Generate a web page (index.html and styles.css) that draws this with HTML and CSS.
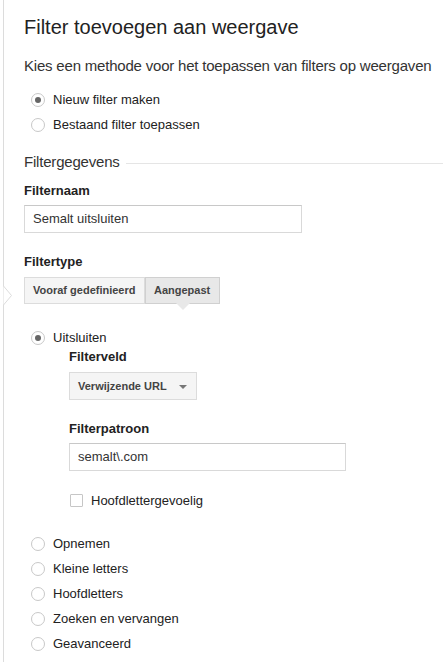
FILE: index.html
```html
<!DOCTYPE html>
<html lang="nl">
<head>
<meta charset="utf-8">
<title>Filter toevoegen aan weergave</title>
<link rel="stylesheet" href="styles.css">
</head>
<body>
<div class="panel">
  <svg class="panel-pointer" width="14" height="22" viewBox="0 0 14 22"><polyline points="0.5,1 8.5,10.5 0.5,20" fill="#fff" stroke="#dcdcdc" stroke-width="1"/></svg>
  <h1 class="title">Filter toevoegen aan weergave</h1>
  <p class="subtitle">Kies een methode voor het toepassen van filters op weergaven</p>
  <div class="radio-list method">
    <label class="radio-row"><span class="radio checked"></span><span>Nieuw filter maken</span></label>
    <label class="radio-row"><span class="radio"></span><span>Bestaand filter toepassen</span></label>
  </div>

  <div class="section-head"><span>Filtergegevens</span><span class="rule"></span></div>

  <div class="field-label first">Filternaam</div>
  <div class="input name-input">Semalt uitsluiten</div>

  <div class="field-label type-label">Filtertype</div>
  <div class="btn-group">
    <div class="seg">Vooraf gedefinieerd</div>
    <div class="seg selected">Aangepast</div>
  </div>

  <div class="radio-list exclude">
    <label class="radio-row"><span class="radio checked"></span><span>Uitsluiten</span></label>
  </div>
  <div class="sub">
    <div class="field-label tight">Filterveld</div>
    <div class="dropdown"><span>Verwijzende URL</span><span class="caret"></span></div>
    <div class="field-label gap">Filterpatroon</div>
    <div class="input pattern-input">semalt\.com</div>
    <label class="check-row"><span class="checkbox"></span><span>Hoofdlettergevoelig</span></label>
  </div>

  <div class="radio-list others">
    <label class="radio-row"><span class="radio"></span><span>Opnemen</span></label>
    <label class="radio-row"><span class="radio"></span><span>Kleine letters</span></label>
    <label class="radio-row"><span class="radio"></span><span>Hoofdletters</span></label>
    <label class="radio-row"><span class="radio"></span><span>Zoeken en vervangen</span></label>
    <label class="radio-row"><span class="radio"></span><span>Geavanceerd</span></label>
  </div>
</div>
</body>
</html>
```

FILE: styles.css
```css
html, body {
  margin: 0;
  padding: 0;
  background: #fff;
}
body {
  font-family: "Liberation Sans", Arial, sans-serif;
  color: #222;
  width: 443px;
  height: 662px;
  overflow: hidden;
}
.panel {
  position: relative;
  margin-left: 3px;
  border-left: 1px solid #dcdcdc;
  padding-left: 20px;
  height: 662px;
  box-sizing: border-box;
}
.panel-pointer {
  position: absolute;
  left: -1px;
  top: 285px;
}
.title {
  margin: 0;
  padding-top: 15px;
  font-size: 20px;
  line-height: 24px;
  font-weight: normal;
  color: #222;
}
.subtitle {
  margin: 17px 0 0;
  font-size: 15px;
  line-height: 20px;
  color: #333;
  white-space: nowrap;
  letter-spacing: -0.2px;
}
.radio-list {
  display: flex;
  flex-direction: column;
  gap: 9px;
}
.radio-list.method { margin-top: 16px; }
.radio-list.exclude { margin-top: 26px; }
.radio-list.others { margin-top: 28px; }
.radio-row {
  display: flex;
  align-items: center;
  gap: 8px;
  height: 16px;
  font-size: 13px;
  line-height: 16px;
  color: #222;
  padding-left: 7px;
}
.radio {
  width: 14px;
  height: 14px;
  box-sizing: border-box;
  border: 1px solid #c8c8c8;
  border-radius: 50%;
  background: #fff;
  display: flex;
  align-items: center;
  justify-content: center;
  flex: none;
}
.radio.checked::after {
  content: "";
  width: 6px;
  height: 6px;
  border-radius: 50%;
  background: #666;
}
.section-head {
  margin-top: 19px;
  display: flex;
  align-items: center;
  gap: 6px;
  font-size: 15px;
  line-height: 20px;
  color: #333;
  letter-spacing: -0.2px;
}
.section-head .rule {
  flex: 1;
  height: 1px;
  background: #e5e5e5;
  margin-top: 2px;
}
.field-label {
  font-size: 13px;
  line-height: 16px;
  font-weight: bold;
  color: #222;
}
.field-label.first { margin-top: 11px; }
.field-label.type-label { margin-top: 21px; }
.field-label.tight { margin-top: 3px; }
.field-label.gap { margin-top: 21px; }
.input {
  margin-top: 6px;
  height: 28px;
  box-sizing: border-box;
  border: 1px solid #d9d9d9;
  border-top-color: #c8c8c8;
  padding-left: 8px;
  font-size: 13px;
  line-height: 26px;
  color: #333;
  background: #fff;
}
.name-input { width: 278px; }
.pattern-input { width: 277px; }
.btn-group {
  margin-top: 7px;
  display: flex;
  width: max-content;
  position: relative;
}
.seg {
  height: 27px;
  box-sizing: border-box;
  border: 1px solid #dcdcdc;
  background: #f5f5f5;
  font-size: 11px;
  font-weight: bold;
  line-height: 25px;
  color: #444;
  padding: 0 8px;
}
.seg + .seg { border-left: none; }
.seg:first-child { width: 121px; }
.seg.selected {
  width: 75px;
  background: #e8e8e8;
  border-color: #d0d0d0;
  border-left: 1px solid #d0d0d0;
  position: relative;
}
.seg.selected::after {
  content: "";
  position: absolute;
  left: 50%;
  bottom: -7px;
  margin-left: -7px;
  width: 0;
  height: 0;
  border-left: 7px solid transparent;
  border-right: 7px solid transparent;
  border-top: 7px solid #e8e8e8;
}
.sub {
  margin-left: 45px;
}
.dropdown {
  margin-top: 7px;
  width: 128px;
  height: 28px;
  box-sizing: border-box;
  border: 1px solid #dcdcdc;
  background: #f5f5f5;
  display: flex;
  align-items: center;
  justify-content: space-between;
  padding: 0 9px 0 8px;
  font-size: 11px;
  font-weight: bold;
  color: #444;
}
.caret {
  width: 0;
  height: 0;
  border-left: 4px solid transparent;
  border-right: 4px solid transparent;
  border-top: 4px solid #777;
  margin-top: 2px;
}
.check-row {
  margin-top: 21px;
  display: flex;
  align-items: center;
  gap: 8px;
  height: 16px;
  font-size: 13px;
  color: #222;
  padding-left: 1px;
}
.checkbox {
  width: 13px;
  height: 13px;
  box-sizing: border-box;
  border: 1px solid #c6c6c6;
  border-radius: 1px;
  background: #fff;
  flex: none;
}
```
